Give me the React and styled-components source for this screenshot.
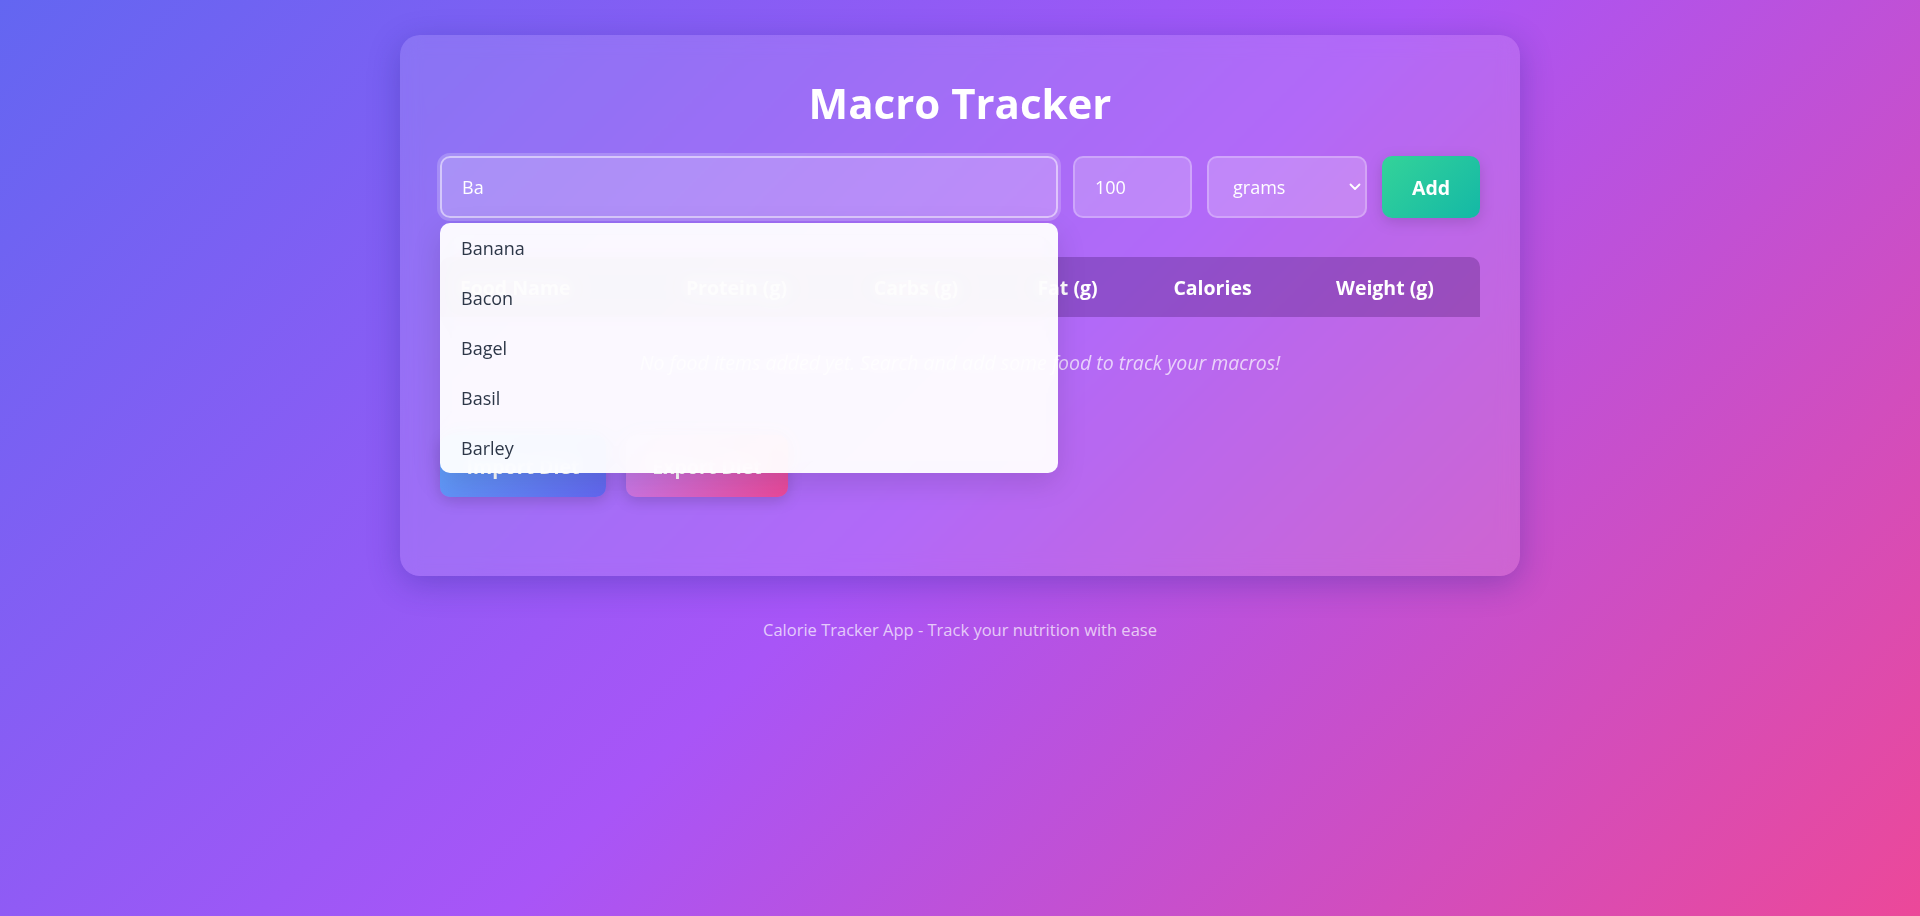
import React, { useState } from 'react';
import styled, { createGlobalStyle } from 'styled-components';

const GlobalStyle = createGlobalStyle`
  html, body { margin: 0; padding: 0; }
  body {
    font-family: "Segoe UI", "Open Sans", "Noto Sans", sans-serif;
    -webkit-font-smoothing: antialiased;
  }
  * { box-sizing: border-box; }
`;

const Page = styled.div`
  min-height: 100vh;
  padding-top: 35px;
  background: linear-gradient(135deg, #6366f1 0%, #a855f7 50%, #ec4899 100%);
`;

const Card = styled.main`
  width: 1120px;
  margin: 0 auto;
  padding: 40px;
  border-radius: 20px;
  background: rgba(255, 255, 255, 0.12);
  backdrop-filter: blur(10px);
  box-shadow: 0 8px 32px 0 rgba(31, 38, 135, 0.3);
`;

const Title = styled.h1`
  margin: 3px 0 28px;
  font-size: 42px;
  line-height: 1.2;
  font-weight: 700;
  color: #ffffff;
  text-align: center;
`;

const InputRow = styled.div`
  display: flex;
  gap: 15px;
  margin-bottom: 39px;
`;

const SearchWrap = styled.div`
  position: relative;
  flex: 1;
`;

const Field = styled.input`
  width: ${(p) => p.$width || '100%'};
  height: 62px;
  padding: 0 20px;
  border-radius: 10px;
  border: 2px solid ${(p) => (p.$focused ? 'rgba(255,255,255,0.5)' : 'rgba(255,255,255,0.25)')};
  background: ${(p) => (p.$focused ? 'rgba(255,255,255,0.22)' : 'rgba(255,255,255,0.2)')};
  box-shadow: ${(p) => (p.$focused ? '0 0 0 3px rgba(255,255,255,0.2)' : 'none')};
  color: #ffffff;
  font-family: inherit;
  font-size: 18px;
  outline: none;
  caret-color: #ffffff;
`;

const SelectWrap = styled.div`
  position: relative;
  width: 160px;
`;

const Select = styled.select`
  width: 100%;
  height: 62px;
  padding: 0 30px 0 24px;
  border-radius: 10px;
  border: 2px solid rgba(255, 255, 255, 0.25);
  background: rgba(255, 255, 255, 0.2);
  color: #ffffff;
  font-family: inherit;
  font-size: 18px;
  appearance: none;
  outline: none;
`;

const Chevron = styled.svg`
  position: absolute;
  right: 6px;
  top: 50%;
  transform: translateY(-50%);
  pointer-events: none;
`;

const AddButton = styled.button`
  width: 98px;
  height: 62px;
  border: none;
  border-radius: 10px;
  background: linear-gradient(135deg, #34d399 0%, #14b8a6 100%);
  color: #ffffff;
  font-family: inherit;
  font-size: 19.5px;
  font-weight: 700;
  box-shadow: 0 4px 15px rgba(0, 0, 0, 0.15);
  cursor: pointer;
`;

const Suggestions = styled.ul`
  position: absolute;
  top: calc(100% + 5px);
  left: 0;
  right: 0;
  margin: 0;
  padding: 0;
  list-style: none;
  border-radius: 10px;
  background: rgba(255, 255, 255, 0.95);
  backdrop-filter: blur(10px);
  box-shadow: 0 10px 30px rgba(0, 0, 0, 0.12);
  z-index: 10;
  overflow: hidden;
`;

const Suggestion = styled.li`
  height: 50px;
  display: flex;
  align-items: center;
  padding: 0 21px;
  color: #2d3748;
  font-size: 18px;
  cursor: pointer;
`;

const Table = styled.table`
  width: 100%;
  border-collapse: collapse;
  table-layout: fixed;
  margin-bottom: 26px;
`;

const HeadCell = styled.th`
  height: 60px;
  padding: 0 20px;
  background: rgba(40, 0, 70, 0.25);
  color: #ffffff;
  font-size: 19.5px;
  font-weight: 700;
  text-align: ${(p) => p.$align || 'center'};
  white-space: nowrap;
  &:first-child { border-top-left-radius: 10px; }
  &:last-child { border-top-right-radius: 10px; }
`;

const EmptyCell = styled.td`
  padding: 33px 0;
  line-height: 26px;
  text-align: center;
  font-size: 19.5px;
  font-style: italic;
  color: rgba(255, 255, 255, 0.7);
`;

const Actions = styled.div`
  display: flex;
  gap: 20px;
  margin-bottom: 39px;
`;

const ActionButton = styled.button`
  height: 62px;
  width: ${(p) => p.$width}px;
  padding: 0;
  border: none;
  border-radius: 10px;
  background: ${(p) => p.$bg};
  color: #ffffff;
  font-family: inherit;
  font-size: 19.5px;
  font-weight: 700;
  box-shadow: 0 4px 15px rgba(0, 0, 0, 0.15);
  cursor: pointer;
`;

const Footer = styled.footer`
  margin-top: 42px;
  text-align: center;
  line-height: 24px;
  font-size: 16.5px;
  color: rgba(255, 255, 255, 0.7);
`;

const columns = [
  { label: 'Food Name', width: 201, align: 'left' },
  { label: 'Protein (g)', width: 191 },
  { label: 'Carbs (g)', width: 168 },
  { label: 'Fat (g)', width: 135 },
  { label: 'Calories', width: 155 },
  { label: 'Weight (g)', width: 190 },
];

const suggestions = ['Banana', 'Bacon', 'Bagel', 'Basil', 'Barley'];

export default function App() {
  const [query, setQuery] = useState('Ba');
  const [qty, setQty] = useState('100');
  const [unit, setUnit] = useState('grams');

  return (
    <>
      <GlobalStyle />
      <Page>
        <Card>
          <Title>Macro Tracker</Title>
          <InputRow>
            <SearchWrap>
              <Field
                $focused
                autoFocus
                value={query}
                onChange={(e) => setQuery(e.target.value)}
                placeholder="Search food..."
              />
              {query && (
                <Suggestions>
                  {suggestions.map((s) => (
                    <Suggestion key={s}>{s}</Suggestion>
                  ))}
                </Suggestions>
              )}
            </SearchWrap>
            <Field $width="119px" value={qty} onChange={(e) => setQty(e.target.value)} />
            <SelectWrap>
              <Select value={unit} onChange={(e) => setUnit(e.target.value)}>
                <option value="grams">grams</option>
                <option value="ounces">ounces</option>
                <option value="cups">cups</option>
              </Select>
              <Chevron width="12" height="8" viewBox="0 0 12 8" fill="none">
                <path d="M1.5 1.5 L6 6 L10.5 1.5" stroke="#ffffff" strokeWidth="1.8" strokeLinecap="round" strokeLinejoin="round" />
              </Chevron>
            </SelectWrap>
            <AddButton>Add</AddButton>
          </InputRow>

          <Table>
            <colgroup>
              {columns.map((c) => (
                <col key={c.label} style={{ width: c.width }} />
              ))}
            </colgroup>
            <thead>
              <tr>
                {columns.map((c) => (
                  <HeadCell key={c.label} $align={c.align}>{c.label}</HeadCell>
                ))}
              </tr>
            </thead>
            <tbody>
              <tr>
                <EmptyCell colSpan={6}>
                  No food items added yet. Search and add some food to track your macros!
                </EmptyCell>
              </tr>
            </tbody>
          </Table>

          <Actions>
            <ActionButton $width={166} $bg="linear-gradient(135deg, #60a5fa 0%, #6366f1 100%)">Import Diet</ActionButton>
            <ActionButton $width={162} $bg="linear-gradient(135deg, #c084fc 0%, #ec4899 100%)">Export Diet</ActionButton>
          </Actions>
        </Card>
        <Footer>Calorie Tracker App - Track your nutrition with ease</Footer>
      </Page>
    </>
  );
}
